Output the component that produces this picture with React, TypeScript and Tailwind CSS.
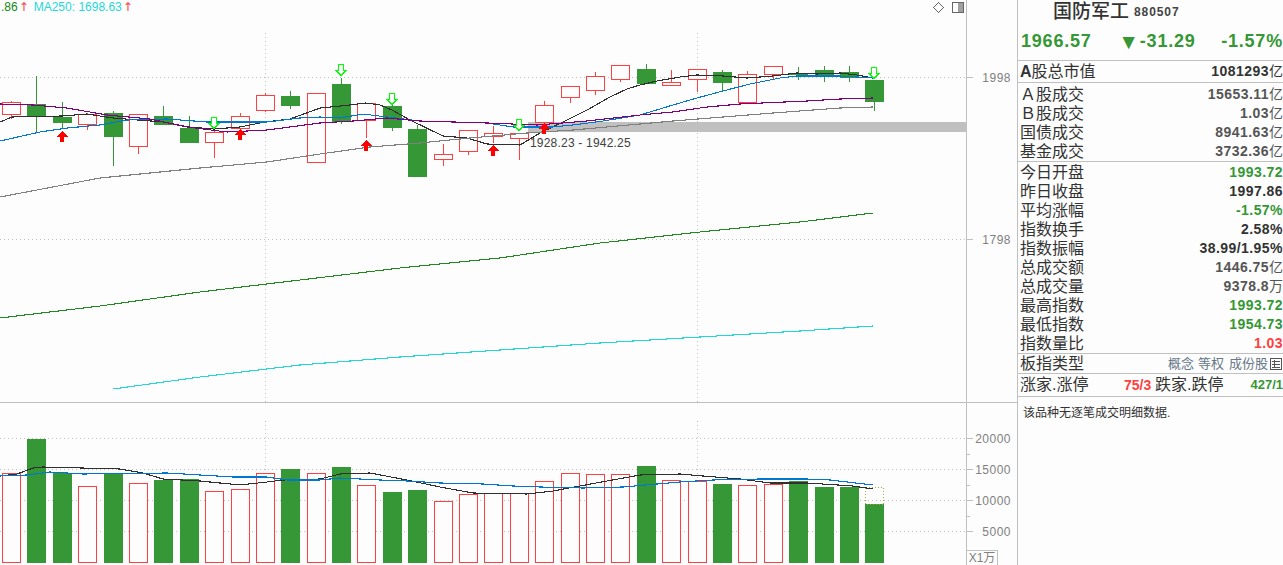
const UP = "#ff4040"
const DOWN = "#359735"

// left, bodyTop, bodyBottom, high, low, rising, volumeTop
type Bar = [number, number, number, number, number, boolean, number]

const bars: Bar[] = [
  [2, 102, 114, 101, 119, true, 473],
  [27, 104, 116, 76, 132, false, 439],
  [53, 117, 122, 102, 128, false, 473],
  [78, 114, 124, 113, 130, true, 486],
  [104, 113, 136, 111, 166, false, 473],
  [129, 114, 146, 114, 154, true, 483],
  [154, 116, 124, 106, 124, false, 480],
  [180, 128, 142, 116, 142, false, 479],
  [205, 132, 142, 131, 158, true, 491],
  [231, 116, 128, 113, 128, true, 489],
  [256, 95, 110, 93, 112, true, 473],
  [281, 96, 105, 91, 109, false, 469],
  [307, 93, 162, 93, 162, true, 473],
  [332, 84, 121, 78, 124, false, 467],
  [357, 103, 120, 103, 138, true, 485],
  [383, 106, 127, 104, 131, false, 492],
  [408, 129, 176, 125, 177, false, 490],
  [434, 154, 159, 144, 166, true, 501],
  [459, 130, 151, 130, 155, true, 494],
  [484, 133, 136, 126, 143, true, 493],
  [510, 133, 138, 133, 160, true, 493],
  [535, 105, 122, 101, 124, true, 481],
  [561, 86, 97, 86, 103, true, 473],
  [586, 76, 90, 72, 95, true, 474],
  [611, 65, 79, 65, 82, true, 474],
  [637, 69, 83, 64, 83, false, 466],
  [662, 82, 85, 70, 85, true, 480],
  [688, 69, 79, 69, 92, true, 481],
  [713, 72, 82, 70, 91, false, 484],
  [738, 74, 102, 71, 102, true, 485],
  [764, 66, 74, 66, 79, true, 484],
  [789, 73, 74, 67, 80, false, 481],
  [815, 70, 75, 66, 82, false, 487],
  [840, 72, 77, 66, 82, false, 487],
  [865, 80, 101, 80, 111, false, 504],
]

const priceLines: { color: string; points: number[][] }[] = [
  {
    color: "#303030",
    points: [[0, 122], [12, 117], [36, 116.5], [62, 116], [87, 114], [113, 118], [138, 120], [164, 122], [189, 127], [214, 129], [240, 127], [265, 122], [290, 119], [320, 108], [341, 106], [366, 103], [380, 105], [392, 110], [410, 120], [443, 136], [467, 138], [487, 144], [520, 145], [540, 133], [563, 122], [587, 110], [610, 97], [627, 89], [640, 85], [657, 81], [680, 77], [697, 75], [723, 76], [747, 78], [773, 76], [797, 73], [817, 74], [840, 73], [857, 75], [873, 78]],
  },
  {
    color: "#808080",
    points: [[0, 197], [100, 178], [200, 168], [267, 162], [320, 154], [370, 147], [420, 143], [470, 138], [527, 133], [573, 130], [640, 124], [673, 121], [723, 117], [773, 113], [840, 108], [873, 107]],
  },
  {
    color: "#0078d0",
    points: [[0, 141], [40, 132], [67, 128], [100, 125], [127, 120], [167, 119], [207, 122], [233, 122], [267, 122], [300, 118], [320, 117], [340, 118], [363, 114], [387, 117], [420, 121], [453, 122], [487, 123], [513, 127], [553, 127], [573, 125], [603, 121], [640, 115], [673, 105], [697, 98], [723, 91], [750, 84], [780, 78], [797, 76], [840, 76], [873, 78]],
  },
  {
    color: "#800080",
    points: [[0, 104], [33, 105], [67, 108], [107, 115], [150, 119], [187, 127], [227, 132], [267, 130], [320, 123], [353, 121], [387, 118], [420, 121], [487, 123], [537, 125], [587, 121], [640, 115], [673, 112], [707, 107], [740, 104], [807, 101], [840, 99], [873, 98]],
  },
  {
    color: "#1f8a1f",
    points: [[0, 318], [100, 306], [200, 292], [300, 280], [400, 268], [500, 258], [600, 243], [700, 232], [800, 222], [873, 213]],
  },
  {
    color: "#1fd8d8",
    points: [[113, 389], [200, 377], [300, 365], [400, 357], [500, 350], [600, 343], [700, 337], [800, 331], [873, 326]],
  },
]

const volumeLines: { color: string; points: number[][] }[] = [
  {
    color: "#303030",
    points: [[0, 476], [17, 474], [33, 468], [43, 467], [120, 469], [143, 473], [163, 479], [200, 481], [240, 485], [267, 482], [283, 480], [320, 479], [340, 474], [370, 473], [407, 480], [440, 487], [473, 493], [527, 494], [553, 491], [580, 486], [607, 481], [640, 475], [680, 474], [703, 476], [740, 479], [770, 483], [807, 483], [853, 486], [873, 489]],
  },
  {
    color: "#0078d0",
    points: [[0, 476], [27, 475], [50, 472], [83, 474], [167, 473], [233, 477], [267, 477], [287, 480], [320, 480], [340, 478], [380, 480], [407, 481], [440, 483], [483, 484], [513, 486], [540, 487], [583, 488], [623, 487], [680, 482], [713, 480], [760, 479], [807, 479], [830, 480], [873, 485]],
  },
]

const redArrows = [[62, 131], [240, 129], [366, 140], [493, 145], [544, 123]]
const greenArrows = [[214, 117], [341, 64], [392, 93], [519, 119], [874, 67]]

function toPoints(points: number[][], offsetY = 0) {
  return points.map(([x, y]) => `${x},${y - offsetY}`).join(" ")
}

function Dotted({ x1, y1, x2, y2 }: { x1: number; y1: number; x2: number; y2: number }) {
  return <line x1={x1} y1={y1 + 0.5} x2={x2} y2={y2 + 0.5} stroke="#c0c0c0" strokeDasharray="1 3" />
}

function PriceChart() {
  return (
    <svg width={966} height={402} shapeRendering="crispEdges" className="block">
      <Dotted x1={0} y1={77} x2={966} y2={77} />
      <Dotted x1={0} y1={239} x2={966} y2={239} />
      <line x1={265.5} y1={33} x2={265.5} y2={402} stroke="#c0c0c0" strokeDasharray="1 3" />
      <line x1={697.5} y1={33} x2={697.5} y2={402} stroke="#c0c0c0" strokeDasharray="1 3" />
      <rect x={528} y={122} width={438} height={10} fill="#c0c0c0" />

      {bars.map(([left, top, bottom, high, low, rising]) => (
        <g key={left}>
          <line x1={left + 9.5} y1={high} x2={left + 9.5} y2={low} stroke={rising ? UP : DOWN} />
          {rising ? (
            <rect x={left + 0.5} y={top + 0.5} width={18} height={bottom - top} fill="#fdfdfd" stroke={UP} />
          ) : (
            <rect x={left} y={top} width={19} height={bottom - top + 1} fill={DOWN} />
          )}
        </g>
      ))}

      {priceLines.map((line) => (
        <polyline key={line.color} points={toPoints(line.points)} fill="none" stroke={line.color} strokeWidth={1.1} />
      ))}

      {redArrows.map(([x, y]) => (
        <path key={x} d={`M${x} ${y}l5.5 5.5h-3.5v5.5h-4v-5.5h-3.5z`} fill="#ff0000" />
      ))}
      {greenArrows.map(([x, y]) => (
        <path
          key={x}
          d={`M${x - 2.5} ${y + 0.5}h5v5.5h3l-5.5 5.5l-5.5 -5.5h3z`}
          fill="#fdfdfd"
          stroke="#00ff00"
        />
      ))}

      <text x={530} y={147} fontSize={12} fill="#404040" letterSpacing={0.2} shapeRendering="auto">
        1928.23 - 1942.25
      </text>
    </svg>
  )
}

function VolumeChart() {
  const top = 403
  return (
    <svg width={966} height={162} shapeRendering="crispEdges" className="block">
      {[438, 469, 500, 531].map((y) => (
        <Dotted key={y} x1={0} y1={y - top} x2={966} y2={y - top} />
      ))}
      <line x1={265.5} y1={18} x2={265.5} y2={162} stroke="#c0c0c0" strokeDasharray="1 3" />
      <line x1={697.5} y1={18} x2={697.5} y2={162} stroke="#c0c0c0" strokeDasharray="1 3" />

      {bars.map(([left, , , , , rising, volume]) =>
        rising ? (
          <rect key={left} x={left + 0.5} y={volume - top + 0.5} width={18} height={562 - volume} fill="#fdfdfd" stroke={UP} />
        ) : (
          <rect key={left} x={left} y={volume - top} width={19} height={563 - volume} fill={DOWN} />
        ),
      )}
      <rect x={865.5} y={487 - top + 0.5} width={18} height={17} fill="none" stroke="#a8a838" strokeDasharray="1 2" />

      {volumeLines.map((line) => (
        <polyline key={line.color} points={toPoints(line.points, top)} fill="none" stroke={line.color} strokeWidth={1.1} />
      ))}
    </svg>
  )
}

function ChartLegend() {
  return (
    <div className="absolute left-[1px] top-0 flex h-[14px] items-center text-[12px]">
      <span className="text-[#118811]">.86</span>
      <span className="ml-[1px] w-[15px] font-['DejaVu_Sans',sans-serif] text-[#ff4040]">↑</span>
      <span className="text-[#1fd8d8]">MA250: 1698.63</span>
      <span className="ml-[1px] font-['DejaVu_Sans',sans-serif] text-[#ff4040]">↑</span>
    </div>
  )
}

function ChartIcons() {
  return (
    <div className="absolute left-[933px] top-[2px] flex items-center gap-[8px]">
      <svg width={11} height={11} viewBox="0 0 11 11" shapeRendering="crispEdges">
        <path d="M5.5 0.5l5 5l-5 5l-5 -5z" fill="none" stroke="#666666" />
      </svg>
      <svg width={12} height={11} viewBox="0 0 12 11" shapeRendering="crispEdges">
        <rect x={0.5} y={0.5} width={11} height={10} fill="#fdfdfd" stroke="#666666" />
        <rect x={6} y={1} width={5} height={9} fill="#a0a0a0" />
      </svg>
    </div>
  )
}

function PriceAxis() {
  return (
    <div className="relative w-[50px] border-l border-[#c0c0c0] text-[12px] text-[#808080]">
      <AxisLabel y={77} text="1998" />
      <AxisLabel y={239} text="1798" />
    </div>
  )
}

function AxisLabel({ y, text }: { y: number; text: string }) {
  return (
    <div className="absolute left-0 right-[5px] flex h-[14px] items-center justify-between" style={{ top: y - 6 }}>
      <span className="-translate-y-px h-px w-[6px] bg-[#c0c0c0]" />
      <span className="tracking-[0.5px]">{text}</span>
    </div>
  )
}

function VolumeAxis() {
  const top = 403
  return (
    <div className="relative w-[50px] border-l border-[#c0c0c0] text-[12px] text-[#808080]">
      <AxisLabel y={438 - top} text="20000" />
      <AxisLabel y={469 - top} text="15000" />
      <AxisLabel y={500 - top} text="10000" />
      <AxisLabel y={531 - top} text="5000" />
      {[454, 485, 516].map((y) => (
        <span key={y} className="absolute left-0 h-px w-[3px] bg-[#c0c0c0]" style={{ top: y - top }} />
      ))}
      <div className="absolute bottom-0 left-0 flex h-[15px] w-[31px] items-center justify-center border-r border-t border-[#c0c0c0]">
        X1万
      </div>
    </div>
  )
}

type Stat = { label: string; value: string; unit?: string; color?: string }

const turnover: Stat[] = [
  { label: "Ａ股成交", value: "15653.11", unit: "亿" },
  { label: "Ｂ股成交", value: "1.03", unit: "亿" },
  { label: "国债成交", value: "8941.63", unit: "亿" },
  { label: "基金成交", value: "3732.36", unit: "亿" },
]

const details: Stat[] = [
  { label: "今日开盘", value: "1993.72", color: "text-[#359735]" },
  { label: "昨日收盘", value: "1997.86", color: "text-[#333333]" },
  { label: "平均涨幅", value: "-1.57%", color: "text-[#359735]" },
  { label: "指数换手", value: "2.58%", color: "text-[#333333]" },
  { label: "指数振幅", value: "38.99/1.95%", color: "text-[#333333]" },
  { label: "总成交额", value: "1446.75", unit: "亿" },
  { label: "总成交量", value: "9378.8", unit: "万" },
  { label: "最高指数", value: "1993.72", color: "text-[#359735]" },
  { label: "最低指数", value: "1954.73", color: "text-[#359735]" },
  { label: "指数量比", value: "1.03", color: "text-[#ff4040]" },
]

function StatRow({ label, value, unit, color = "text-[#555555]" }: Stat) {
  return (
    <div className="flex h-[19px] items-center justify-between pl-[2px] text-[16px] text-[#333333]">
      <span>{label}</span>
      <span className={`flex items-center text-[14px] font-bold tracking-[0.45px] ${color}`}>
        {value}
        {unit && <span className="text-[14px] font-normal tracking-normal">{unit}</span>}
      </span>
    </div>
  )
}

function InfoPanel() {
  return (
    <div className="flex-1 overflow-hidden">
      <div className="flex h-[22px] items-center pl-[35px]">
        <span className="text-[19px] font-medium leading-none text-[#333333]">国防军工</span>
        <span className="ml-[5px] mt-[2px] text-[12px] font-bold tracking-[0.9px] text-[#444444]">880507</span>
      </div>
      <div className="flex h-[38px] items-center justify-between pl-[3px] text-[18px] font-bold tracking-[0.8px] text-[#359735]">
        <span>1966.57</span>
        <span className="mr-[-1px] flex items-center">
          <span className="text-[21px] leading-none">▼</span>-31.29
        </span>
        <span>-1.57%</span>
      </div>
      <div className="flex h-[23px] items-center justify-between border-y border-[#c0c0c0] pl-[2px] text-[16px] text-[#333333]">
        <span>
          <b>A</b>股总市值
        </span>
        <span className="flex items-center text-[14px] font-bold tracking-[0.45px] text-[#333333]">
          1081293<span className="text-[14px] font-normal tracking-normal">亿</span>
        </span>
      </div>
      <div className="flex flex-col border-b border-[#c0c0c0] pt-[2px]">
        {turnover.map((row) => (
          <StatRow key={row.label} {...row} />
        ))}
      </div>
      <div className="flex flex-col border-b border-[#c0c0c0] pt-[1px]">
        {details.map((row) => (
          <StatRow key={row.label} {...row} />
        ))}
      </div>
      <div className="flex h-[20px] items-center justify-between border-b border-[#c0c0c0] pl-[2px] text-[16px] text-[#333333]">
        <span>板指类型</span>
        <span className="flex items-center text-[13px] text-[#667788]">
          <span>概念</span>
          <span className="ml-[4px]">等权</span>
          <span className="ml-[5px]">成份股</span>
          <svg width={12} height={12} viewBox="0 0 12 12" className="ml-[2px] mr-[1px]" shapeRendering="crispEdges">
            <rect x={0.5} y={0.5} width={11} height={11} rx={1} fill="none" stroke="#555555" />
            <path d="M2 3.5h8M2 6.5h8M2 9.5h8M4.5 2v8" stroke="#555555" fill="none" />
          </svg>
        </span>
      </div>
      <div className="flex h-[23px] items-center border-b border-[#c0c0c0] pl-[2px] text-[16px] text-[#333333]">
        <span className="w-[104px]">涨家.涨停</span>
        <span className="w-[31px] text-[14px] font-bold text-[#ff4040]">75/3</span>
        <span>跌家.跌停</span>
        <span className="ml-auto text-[13px] font-bold text-[#359735]">427/1</span>
      </div>
      <p className="pl-[5px] pt-[7px] text-[12px] text-[#333333]">该品种无逐笔成交明细数据.</p>
    </div>
  )
}

export default function App() {
  return (
    <div className="flex h-[565px] w-[1283px] overflow-hidden bg-[#fdfdfd] font-['Liberation_Sans','Noto_Sans_CJK_SC',sans-serif]">
      <div className="flex w-[1018px] shrink-0 flex-col border-r border-[#c0c0c0]">
        <div className="relative flex h-[403px] border-b border-[#c0c0c0]">
          <PriceChart />
          <PriceAxis />
          <ChartLegend />
          <ChartIcons />
        </div>
        <div className="flex flex-1">
          <VolumeChart />
          <VolumeAxis />
        </div>
      </div>
      <InfoPanel />
    </div>
  )
}
